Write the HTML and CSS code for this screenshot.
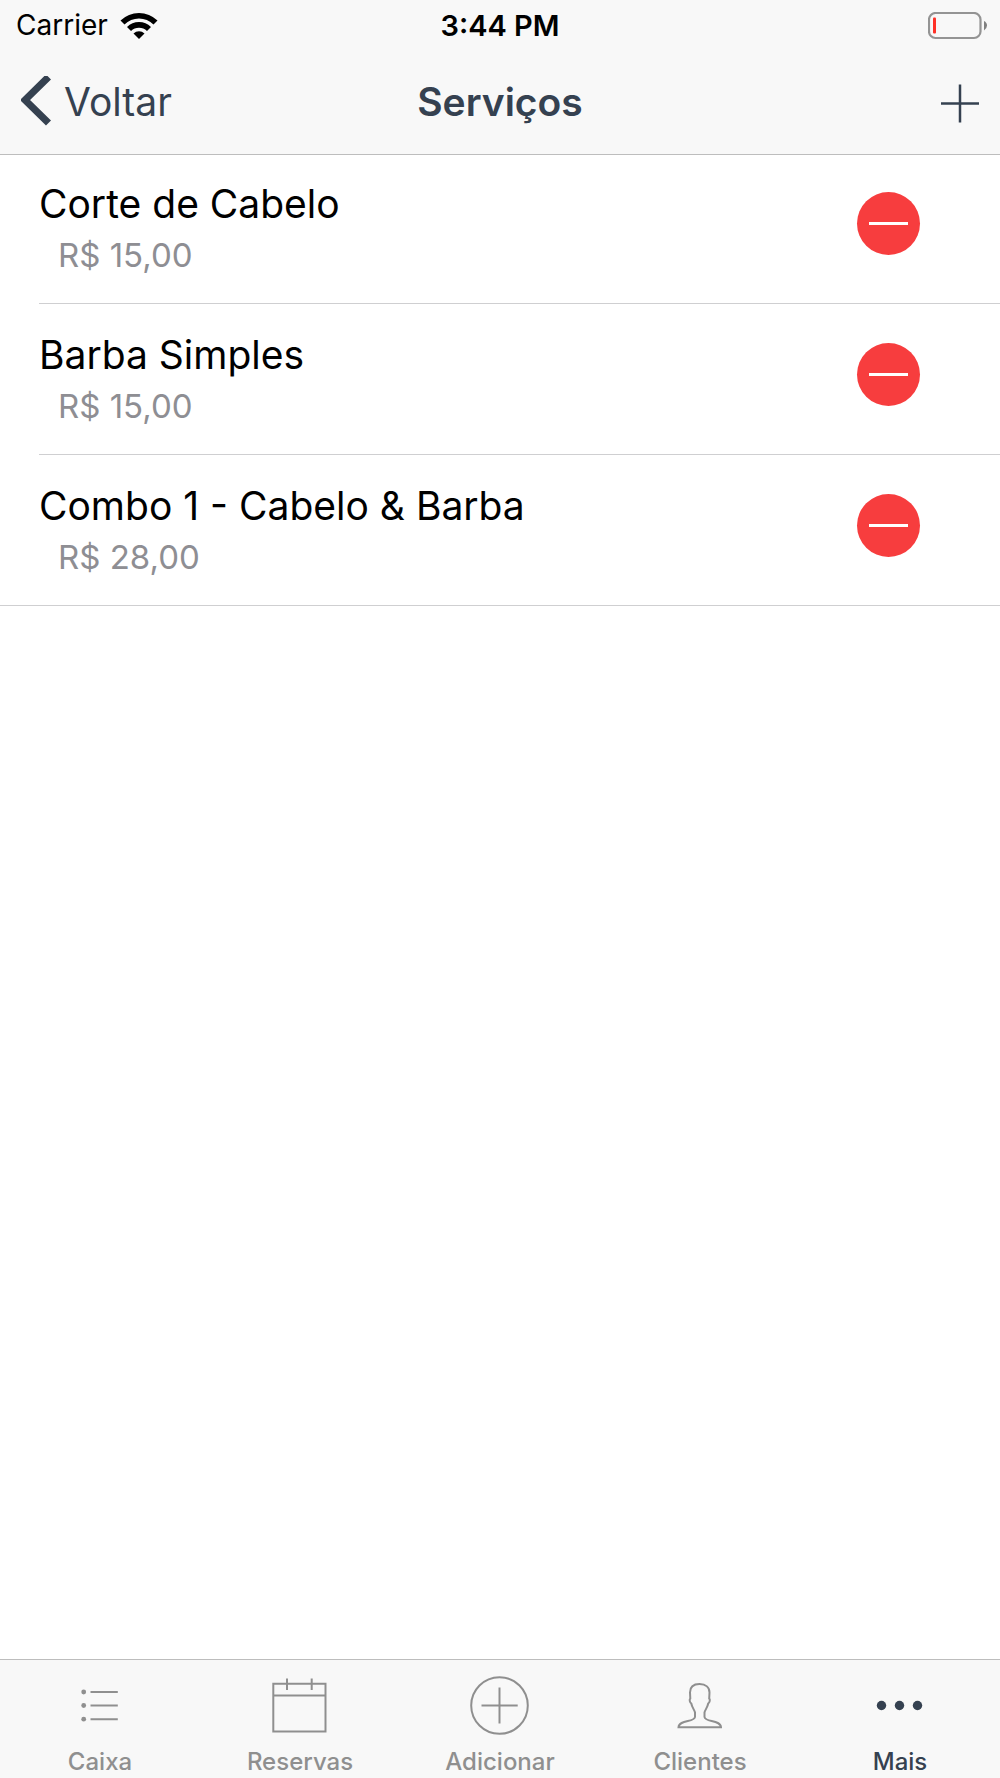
FILE: index.html
```html
<!DOCTYPE html>
<html lang="pt-BR">
<head>
<meta charset="utf-8">
<meta name="viewport" content="width=device-width, initial-scale=1">
<title>Serviços</title>
<link rel="stylesheet" href="styles.css">
</head>
<body>
<div class="app">
  <header class="top">
    <div class="status">
      <div class="carrier">
        <span>Carrier</span>
        <svg class="wifi" width="38" height="28" viewBox="0 0 38 28" aria-hidden="true">
          <path d="M0.5 8.500A26.500 26.500 0 0 1 37.500 8.500L33.500 12.500A20.500 20.500 0 0 0 4.500 12.500Z"/>
          <path d="M7 15A17.200 17.200 0 0 1 31 15L27 19A11.500 11.500 0 0 0 11 19Z"/>
          <path d="M13.500 21.500A8 8 0 0 1 24.500 21.500L19 27Z"/>
        </svg>
      </div>
      <time class="clock">3:44 PM</time>
      <div class="power">
        <svg width="60" height="28" viewBox="0 0 60 28" aria-hidden="true">
          <rect x="1" y="1" width="51.500" height="25" rx="6.500" fill="none" stroke="#949494" stroke-width="2.200"/>
          <rect x="5" y="5.500" width="3" height="16" rx="1" fill="#ff3127"/>
          <path d="M56 9Q59 10.500 59 13.500T56 18.500Z" fill="#808080"/>
        </svg>
      </div>
    </div>
    <nav class="navbar" aria-label="Navegação">
      <a class="back" href="#">
        <svg width="30" height="52" viewBox="0 0 30 52" aria-hidden="true">
          <path d="M27.500 1L4 24L27.500 47" fill="none" stroke="currentColor" stroke-width="7.200"/>
        </svg>
        <span>Voltar</span>
      </a>
      <h1 class="title">Serviços</h1>
      <button class="add" type="button" aria-label="Adicionar serviço">
        <svg width="38" height="42" viewBox="0 0 38 42" aria-hidden="true">
          <path d="M0 22.500H38M19 3.500V41.500" fill="none" stroke="currentColor" stroke-width="2.500"/>
        </svg>
      </button>
    </nav>
  </header>

  <main class="content">
    <ul class="services">
      <li class="service">
        <div class="info"><span class="name">Corte de Cabelo</span><span class="price">R$ 15,00</span></div>
        <button class="remove" type="button" aria-label="Remover Corte de Cabelo"></button>
      </li>
      <li class="service">
        <div class="info"><span class="name">Barba Simples</span><span class="price">R$ 15,00</span></div>
        <button class="remove" type="button" aria-label="Remover Barba Simples"></button>
      </li>
      <li class="service">
        <div class="info"><span class="name">Combo 1 - Cabelo &amp; Barba</span><span class="price">R$ 28,00</span></div>
        <button class="remove" type="button" aria-label="Remover Combo 1"></button>
      </li>
    </ul>
  </main>

  <nav class="tabs" aria-label="Abas">
    <a class="tab" href="#">
      <svg class="icon" viewBox="0 0 60 60" aria-hidden="true">
        <path d="M20.500 16H47.800M20.500 29.500H47.800M20.500 43.200H47.800"/>
        <g class="solid"><circle cx="13.700" cy="16" r="2.400"/><circle cx="13.700" cy="29.500" r="2.400"/><circle cx="13.700" cy="43.200" r="2.400"/></g>
      </svg>
      <span>Caixa</span>
    </a>
    <a class="tab" href="#">
      <svg class="icon" viewBox="0 0 60 60" aria-hidden="true">
        <path d="M3.300 7.800H55.500V55.500H3.300ZM3.300 19.400H55.500M17 2.500V14M41.700 2.500V14"/>
      </svg>
      <span>Reservas</span>
    </a>
    <a class="tab" href="#">
      <svg class="icon" viewBox="0 0 60 60" aria-hidden="true">
        <circle cx="29.500" cy="29.500" r="28.300"/>
        <path d="M11.500 29.500H47.700M29.500 11.500V47.500"/>
      </svg>
      <span>Adicionar</span>
    </a>
    <a class="tab" href="#">
      <svg class="icon" viewBox="0 0 60 60" aria-hidden="true">
        <path d="M29.500 8C23 8 20 11.500 20 16.500L20.300 22.500C19.300 23.500 19.500 26 21.300 27.500C22 31.500 24.500 34 25 36.500V41C24.500 46.500 9 43.500 8.500 51.300H51C50.500 43.500 35 46.500 34.500 41V36.500C35 34 37.500 31.500 38.200 27.500C40 26 40.200 23.500 39.200 22.500L39.500 16.500C39.500 11.500 36 8 29.500 8Z"/>
      </svg>
      <span>Clientes</span>
    </a>
    <a class="tab active" href="#" aria-current="page">
      <svg class="icon" viewBox="0 0 60 60" aria-hidden="true">
        <g class="solid"><circle cx="11.500" cy="29.500" r="4.700"/><circle cx="29.500" cy="29.500" r="4.700"/><circle cx="47.500" cy="29.500" r="4.700"/></g>
      </svg>
      <span>Mais</span>
    </a>
  </nav>
</div>
</body>
</html>
```
FILE: styles.css
```css
* {
  box-sizing: border-box;
}

body {
  margin: 0;
  background: #fff;
  color: #000;
  font-family: Inter, "Liberation Sans", sans-serif;
}

a {
  color: inherit;
  text-decoration: none;
}

button {
  padding: 0;
  border: 0;
  background: none;
  color: inherit;
  cursor: pointer;
}

svg {
  display: block;
  flex: none;
}

.app {
  display: flex;
  flex-direction: column;
  min-height: 100vh;
}

.top {
  background: #f8f8f8;
  border-bottom: 1px solid #bdbdbd;
}

.status,
.navbar {
  display: grid;
  grid-template-columns: 1fr auto 1fr;
  align-items: center;
}

.status {
  height: 51px;
  padding: 0 12px;
  font-size: 28px;
  line-height: 51px;
}

.carrier {
  display: flex;
  align-items: center;
  gap: 12px;
  padding-left: 4px;
}

.wifi {
  fill: #000;
}

.clock {
  font-size: 29px;
  font-weight: 600;
}

.power {
  justify-self: end;
}

.navbar {
  height: 103px;
  padding: 0 21px 2px;
  color: #354150;
}

.back {
  display: flex;
  align-items: center;
  gap: 13px;
  font-size: 39px;
  line-height: 52px;
}

.title {
  margin: 0;
  font-size: 39px;
  font-weight: 600;
  line-height: 52px;
}

.add {
  justify-self: end;
}

.content {
  flex: 1;
}

.services {
  margin: 0;
  padding: 0;
  border-bottom: 1px solid #cfcfd1;
  list-style: none;
}

.service {
  display: flex;
  align-items: flex-start;
  justify-content: space-between;
  margin-left: 39px;
  padding: 24px 80px 22px 0;
}

.service + .service {
  padding-top: 26px;
  border-top: 1px solid #cfcfd1;
}

.info {
  display: flex;
  flex-direction: column;
}

.name {
  font-size: 39px;
  line-height: 50px;
}

.price {
  padding-left: 19px;
  color: #8e8e93;
  font-size: 33px;
  line-height: 52px;
}

.remove {
  display: grid;
  place-items: center;
  width: 63px;
  height: 63px;
  margin-top: 13px;
  border-radius: 50%;
  background: #f73d3e;
}

.remove::before {
  content: "";
  width: 39px;
  height: 3px;
  background: #fff;
}

.tabs {
  display: grid;
  grid-template-columns: repeat(5, 1fr);
  padding: 16px 0 2px;
  border-top: 1px solid #bdbdbd;
  background: #f8f8f8;
}

.tab {
  display: flex;
  flex-direction: column;
  align-items: center;
  gap: 12px;
  color: #8f8f8f;
  font-size: 24px;
  font-weight: 500;
  line-height: 28px;
}

.active {
  color: #354150;
}

.icon {
  width: 60px;
  height: 60px;
  fill: none;
  stroke: currentColor;
  stroke-width: 2;
}

.solid {
  fill: currentColor;
  stroke: none;
}
```
